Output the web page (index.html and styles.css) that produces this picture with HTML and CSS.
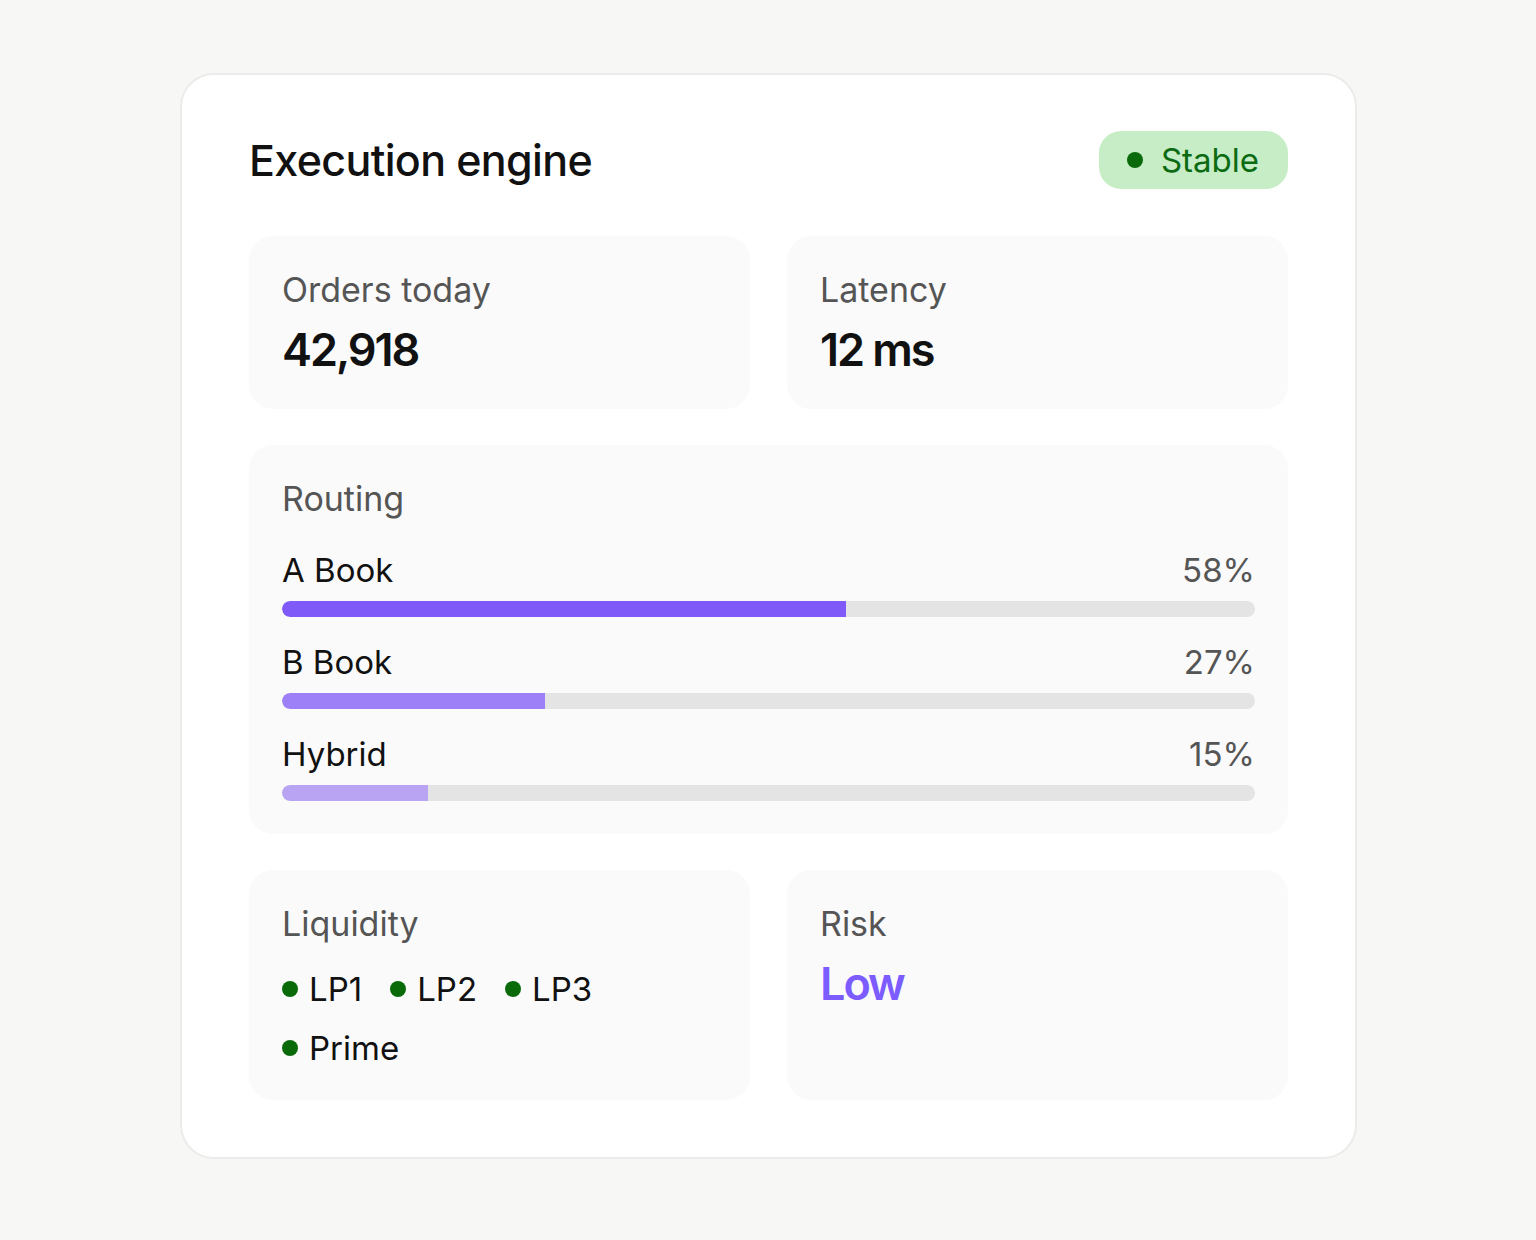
FILE: index.html
```html
<!DOCTYPE html>
<html lang="en">
<head>
  <meta charset="UTF-8" />
  <meta name="viewport" content="width=device-width, initial-scale=1.0"/>
  <title>Execution engine</title>
  <link rel="stylesheet" href="styles.css">
</head>
<body>
  <main class="card">
    <header class="card-head">
      <h1>Execution engine</h1>
      <span class="badge"><span class="dot"></span>Stable</span>
    </header>

    <section class="stats">
      <div class="tile">
        <p class="label">Orders today</p>
        <p class="value">42,918</p>
      </div>
      <div class="tile">
        <p class="label">Latency</p>
        <p class="value">12 ms</p>
      </div>
    </section>

    <section class="tile routing">
      <p class="label">Routing</p>
      <div class="route">
        <div class="route-top"><span>A Book</span><span class="pct">58%</span></div>
        <div class="track"><div class="fill fill-a" style="width: 58%"></div></div>
      </div>
      <div class="route">
        <div class="route-top"><span>B Book</span><span class="pct">27%</span></div>
        <div class="track"><div class="fill fill-b" style="width: 27%"></div></div>
      </div>
      <div class="route">
        <div class="route-top"><span>Hybrid</span><span class="pct">15%</span></div>
        <div class="track"><div class="fill fill-c" style="width: 15%"></div></div>
      </div>
    </section>

    <section class="stats">
      <div class="tile">
        <p class="label">Liquidity</p>
        <ul class="lps">
          <li><span class="dot"></span>LP1</li>
          <li><span class="dot"></span>LP2</li>
          <li><span class="dot"></span>LP3</li>
          <li><span class="dot"></span>Prime</li>
        </ul>
      </div>
      <div class="tile">
        <p class="label">Risk</p>
        <p class="value risk">Low</p>
      </div>
    </section>
  </main>
</body>
</html>
```

FILE: styles.css
```css
body {
  margin: 0;
  font-family: Inter, "Noto Sans", sans-serif;
  background: #f7f7f5;
  color: #111;
}

p, h1, ul {
  margin: 0;
}

.card {
  width: 1039px;
  margin: 73px 0 0 180px;
  padding: 56px 67px 57px;
  background: #fff;
  border: 2px solid #ebebe9;
  border-radius: 34px;
  display: flex;
  flex-direction: column;
  gap: 36px;
}

.card-head {
  display: flex;
  justify-content: space-between;
  align-items: center;
  margin-bottom: 11px;
}

.card-head h1 {
  font-size: 43px;
  font-weight: 500;
  letter-spacing: -0.015em;
}

.badge {
  display: flex;
  align-items: center;
  gap: 18px;
  height: 58px;
  padding: 0 29px 0 28px;
  background: #c6edc6;
  color: #0b6a12;
  border-radius: 22px;
  font-size: 33px;
}

.dot {
  width: 16px;
  height: 16px;
  border-radius: 50%;
  background: #0a6a0a;
  flex-shrink: 0;
}

.stats {
  display: grid;
  grid-template-columns: 1fr 1fr;
  gap: 37px;
}

.tile {
  background: #fafafa;
  border-radius: 24px;
  padding: 34px 33px 32px;
  display: flex;
  flex-direction: column;
  gap: 12px;
}

.label {
  font-size: 34px;
  line-height: 40px;
  color: #555;
}

.value {
  font-size: 45px;
  line-height: 55px;
  font-weight: 600;
  letter-spacing: -0.045em;
}

.risk {
  color: #7c5cff;
}

.routing {
  gap: 0;
  padding-bottom: 33px;
}

.routing .label {
  margin-bottom: 31px;
}

.route + .route {
  margin-top: 25px;
}

.route-top {
  display: flex;
  justify-content: space-between;
  font-size: 33px;
  line-height: 40px;
  margin-bottom: 11px;
}

.pct {
  color: #555;
}

.track {
  height: 16px;
  background: #e4e4e4;
  border-radius: 8px;
  overflow: hidden;
}

.fill {
  height: 100%;
  border-radius: 8px 0 0 8px;
}

.fill-a {
  background: #7f5af8;
}

.fill-b {
  background: #9d80f7;
}

.fill-c {
  background: #b9a4f3;
}

.lps {
  list-style: none;
  padding: 0;
  margin-top: 13px;
  display: flex;
  flex-wrap: wrap;
  column-gap: 28px;
  row-gap: 19px;
  font-size: 33px;
  line-height: 40px;
}

.lps li {
  display: flex;
  align-items: center;
  gap: 11px;
}
```
